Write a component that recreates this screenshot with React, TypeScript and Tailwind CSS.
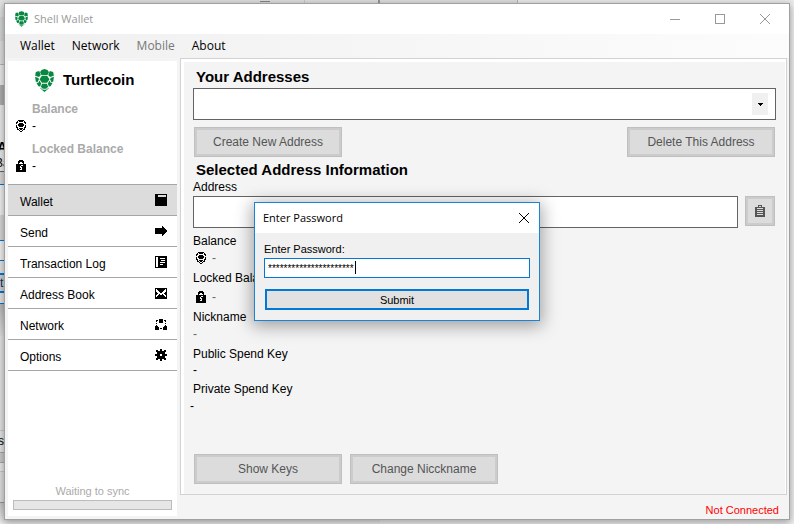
import React from "react";

type PixelIconProps = { rows: string[]; className?: string };

/* Monochrome bitmap glyph: "#" is ink, "." is blank. */
function PixelIcon({ rows, className = "" }: PixelIconProps) {
  const width = rows[0].length;
  return (
    <svg
      width={width}
      height={rows.length}
      viewBox={`0 0 ${width} ${rows.length}`}
      shapeRendering="crispEdges"
      fill="currentColor"
      aria-hidden="true"
      className={`shrink-0 ${className}`}
    >
      {rows.flatMap((row, y) =>
        [...row].map((c, x) => (c === "#" ? <rect key={`${x}-${y}`} x={x} y={y} width="1" height="1" /> : null)),
      )}
    </svg>
  );
}

const WALLET = [
  "############",
  "###........#",
  "###........#",
  "############",
  "############",
  "############",
  "############",
  "############",
  "############",
  "############",
  "############",
  "############",
];
const SEND = [
  "............",
  ".......#....",
  ".......##...",
  "##########..",
  "###########.",
  "############",
  "############",
  "###########.",
  "##########..",
  ".......##...",
  ".......#....",
  "............",
];
const LOG = [
  "############",
  "#..#########",
  "#..##.....##",
  "#..#########",
  "#..###....##",
  "#..#########",
  "#..##.....##",
  "#..#########",
  "#..##...####",
  "#..#########",
  "#..#########",
  "############",
];
const MAIL = [
  "############",
  "#.########.#",
  "#..######..#",
  "#...####...#",
  "##...##...##",
  "###......###",
  "##..#..#..##",
  "#..######..#",
  "#.########.#",
  "############",
  "############",
];
const NETWORK = [
  "....####....",
  ".##.####.##.",
  ".#..####..#.",
  "....####....",
  ".#........#.",
  "............",
  ".#........#.",
  "###......###",
  "####....####",
  "####.##.####",
  "####....####",
];
const GEAR = [
  ".....##.....",
  ".##..##..##.",
  ".##########.",
  "..########..",
  "..########..",
  "#####..#####",
  "#####..#####",
  "..########..",
  "..########..",
  ".##########.",
  ".##..##..##.",
  ".....##.....",
];
const COIN = [
  "..######..",
  ".#.####.#.",
  "##......##",
  "#..####..#",
  "..######..",
  "#.######.#",
  "#..####..#",
  "##......##",
  ".#.####.#.",
  ".##.##.##.",
  "...#..#...",
  "....##....",
];
const LOCK = [
  "...####...",
  "..######..",
  "..##..##..",
  "..#....#..",
  "##########",
  "#####..###",
  "####.#####",
  "####..####",
  "#####.####",
  "####..####",
  "##########",
  "##########",
];
const CLIPBOARD = [
  "...####...",
  "...#..#...",
  "##########",
  "##......##",
  "##########",
  "##......##",
  "##########",
  "##......##",
  "##########",
  "##......##",
  "##########",
  "##########",
];

function ShellLogo({ className }: { className: string }) {
  return (
    <svg viewBox="0 0 19 23" fill="#07873f" aria-hidden="true" className={`shrink-0 ${className}`}>
      <path d="M6.5 1 9.5 0 12.5 1 14 3.2 12.5 5.9H6.5L5 3.2z" />
      <path d="M.8 2.9 4.2 2.1 5.8 5.9 4 8 .2 6.8z" />
      <path d="M18.2 2.9 14.8 2.1 13.2 5.9 15 8l3.8-1.2z" />
      <path d="M6.9 6.8h5.2l2.4 3.5-2.4 3.5H6.9l-2.4-3.5z" />
      <path d="M.1 7.8 3.5 8.9 3.8 10.6 2.7 13 .8 12.8z" />
      <path d="M18.9 7.8 15.5 8.9l-.3 1.7L16.3 13l1.9-.2z" />
      <path d="M4.4 11.6 6.2 14.4 5.2 17.6 3.4 17.3 1.4 13.8 3.4 13.7z" />
      <path d="M14.6 11.6 12.8 14.4l1 3.2 1.8-.3 2-3.5-2-.1z" />
      <path d="M7 14.7h5l1.1 3-1.9 2.1H7.8L5.9 17.7z" />
      <path d="M5.4 18.4 7.3 20.5 9.5 20.7 11.7 20.5 13.6 18.4 13.6 19.6 9.5 23 5.4 19.6z" />
    </svg>
  );
}

function Cross({ className = "" }: { className?: string }) {
  return (
    <svg width="12" height="12" viewBox="0 0 12 12" stroke="currentColor" fill="none" aria-hidden="true" className={className}>
      <path d="M1 1 11 11M11 1 1 11" />
    </svg>
  );
}

const NAV = [
  { label: "Wallet", icon: WALLET, active: true },
  { label: "Send", icon: SEND },
  { label: "Transaction Log", icon: LOG },
  { label: "Address Book", icon: MAIL },
  { label: "Network", icon: NETWORK },
  { label: "Options", icon: GEAR },
];

const BUTTON =
  "flex h-[30px] items-center justify-center border border-[#bfbfbf] bg-[#dcdcdc] text-[12px] text-[#555] ring-2 ring-inset ring-[#cccccc]";

/* Slices of the windows lying behind the wallet. */
function BackWindows() {
  return (
    <div aria-hidden="true" className="absolute inset-0 overflow-hidden bg-[#f4f4f4] text-[12px]">
      <div className="flex h-[3px] bg-[#e4e4e4]">
        <div className="w-[260px]" />
        <div className="mt-px h-px w-[10px] bg-[#888]" />
        <div className="w-[35px] border-r border-[#ccc]" />
        <div className="w-[75px] border-r-2 border-[#999]" />
        <div className="w-[138px] border-r border-[#bbb]" />
        <div className="flex-1 bg-[#efefef]" />
      </div>
      <div className="w-[380px]">
        <div className="h-[14px] bg-[#e6e6e6]" />
        <div className="h-6 bg-[#dadada]" />
        <div className="h-6 border-b border-[#bbb] bg-[#e4e4e4]" />
        <div className="h-5 bg-[#efefef]" />
        <div className="h-5 bg-[#b2b2b2]" />
        <div className="h-[67px] border-b border-[#666] bg-[#efefef] pt-[34px] leading-4">
          <div className="-ml-[3px] text-[14px] font-bold">A</div>
          <div className="-ml-[5px]">Ba</div>
        </div>
        <div className="h-3 bg-[#ddd]" />
        <div className="h-[31px] border-t border-[#0078d7] bg-[#f5f5f5]" />
        <div className="h-[26px] border-b border-[#0078d7] bg-[#dcdcdc]" />
        <div className="h-5 border-b border-[#0078d7] bg-[#f5f5f5]" />
        <div className="h-3 bg-[#e8e8e8]" />
        <div className="h-5 border-y-2 border-[#0078d7] bg-[#d4d4d4] leading-4 text-[#036]">t</div>
        <div className="h-[11px] border-b border-[#0078d7] bg-[#e8e8e8]" />
        <div className="h-8 bg-linear-to-b from-[#bbb] to-[#e4e4e4]" />
        <div className="h-[95px] border-b border-[#ccc] bg-[#e9e9e9]" />
        <div className="h-[21px] bg-[#e9e9e9] pt-[2px] leading-4">
          <div className="-ml-[2px]">sy</div>
        </div>
        <div className="h-[11px] border-y border-[#aaa] bg-[#cfcfcf]" />
        <div className="h-[9px] border-b border-[#ccc] bg-[#eee]" />
        <div className="h-[31px] border-b border-[#999] bg-[#e4e4e4]" />
        <div className="h-[22px] bg-linear-to-b from-[#ccc] to-[#f4f4f4]" />
      </div>
    </div>
  );
}

function Sidebar() {
  return (
    <aside className="flex w-[169px] shrink-0 flex-col bg-white">
      <div className="flex h-[38px] items-center gap-[9px] pl-[27px]">
        <ShellLogo className="h-[23px] w-[19px]" />
        <h1 className="pt-px text-[15px] font-bold">Turtlecoin</h1>
      </div>
      <div className="flex flex-col pl-2 text-[12px] leading-5">
        <h2 className="pl-4 font-bold text-[#aaa]">Balance</h2>
        <p className="flex items-center gap-[6px] leading-[14px]">
          <PixelIcon rows={COIN} />
          <span>-</span>
        </p>
        <h2 className="mt-[6px] pl-4 font-bold text-[#aaa]">Locked Balance</h2>
        <p className="flex items-center gap-[6px] leading-[14px]">
          <PixelIcon rows={LOCK} />
          <span>-</span>
        </p>
      </div>
      <nav className="mt-[11px] border-t border-[#a6a6a6]">
        {NAV.map((item) => (
          <button
            key={item.label}
            type="button"
            className={`flex h-[31px] w-full items-center justify-between border-b border-[#a6a6a6] pr-[10px] pl-3 text-[12px] ${
              item.active ? "bg-[#dcdcdc]" : "bg-white"
            }`}
          >
            <span className="pt-1">{item.label}</span>
            <PixelIcon rows={item.icon} />
          </button>
        ))}
      </nav>
      <div className="mt-auto px-[5px] pb-[6px]">
        <p id="sync" className="text-center text-[11px] leading-[18px] text-[#aaa]">
          Waiting to sync
        </p>
        <div role="progressbar" aria-labelledby="sync" className="h-[10px] border border-[#bcbcbc] bg-[#e6e6e6]" />
      </div>
    </aside>
  );
}

function WalletPanel() {
  return (
    <main className="flex flex-1 flex-col border border-[#d2d2d2] bg-white pt-[3px] pr-px pl-[3px]">
      <div className="flex flex-1 flex-col bg-[#f4f4f4] pr-[9px] pb-[10px] pl-[9px] text-[12px]">
        <label htmlFor="addresses" className="pt-1 pb-px pl-[3px] text-[15px] leading-[21px] font-bold">
          Your Addresses
        </label>
        <div className="relative">
          <select id="addresses" className="block h-8 w-full appearance-none border border-[#646464] bg-white">
            <option></option>
          </select>
          <span className="pointer-events-none absolute top-[5px] right-2 flex h-[22px] w-4 items-center justify-center bg-[#f0f0f0]">
            <PixelIcon rows={["#####", ".###.", "..#.."]} />
          </span>
        </div>
        <div className="mt-[7px] flex justify-between pr-px pl-px">
          <button type="button" className={`${BUTTON} w-[148px]`}>Create New Address</button>
          <button type="button" className={`${BUTTON} w-[148px]`}>Delete This Address</button>
        </div>
        <h2 className="mt-[2px] pl-[3px] text-[15px] leading-[21px] font-bold">Selected Address Information</h2>
        <label htmlFor="address" className="pb-px leading-[15px]">Address</label>
        <div className="flex gap-[7px] pr-px">
          <input id="address" type="text" readOnly className="h-8 min-w-0 flex-1 border border-[#646464] bg-white px-1" />
          <button type="button" aria-label="Copy address" className={`${BUTTON} w-[30px]`}>
            <PixelIcon rows={CLIPBOARD} />
          </button>
        </div>
        <dl className="mt-1 leading-[18px]">
          <dt>Balance</dt>
          <dd className="flex items-center gap-[6px] pl-[3px] leading-4">
            <PixelIcon rows={COIN} />
            <span className="text-[#666]">-</span>
          </dd>
          <dt className="mt-[3px]">Locked Balance</dt>
          <dd className="flex items-center gap-[6px] pt-[2px] pl-[3px] leading-4">
            <PixelIcon rows={LOCK} />
            <span className="text-[#666]">-</span>
          </dd>
          <dt className="mt-[3px]">Nickname</dt>
          <dd className="leading-4 text-[#666]">-</dd>
          <dt className="mt-[3px]">Public Spend Key</dt>
          <dd className="leading-[14px]">-</dd>
          <dt className="mt-[3px]">Private Spend Key</dt>
          <dd className="-ml-[3px] leading-4">-</dd>
        </dl>
        <div className="mt-auto flex gap-2 pl-px">
          <button type="button" className={`${BUTTON} w-[148px]`}>Show Keys</button>
          <button type="button" className={`${BUTTON} w-[148px]`}>Change Nicckname</button>
        </div>
      </div>
    </main>
  );
}

function PasswordDialog() {
  return (
    <form
      role="dialog"
      aria-label="Enter Password"
      onSubmit={(e) => e.preventDefault()}
      className="absolute top-[202px] left-[254px] w-[286px] border border-[#1883d7] bg-[#f0f0f0] pb-[10px] shadow-[0_3px_16px_2px_rgba(0,0,0,0.35)]"
    >
      <header className="flex h-[30px] items-center justify-between bg-white pr-[9px] pl-2 font-['Open_Sans',sans-serif] text-[11px]">
        <span>Enter Password</span>
        <button type="button" aria-label="Close">
          <Cross />
        </button>
      </header>
      <div className="flex flex-col px-[9px] pt-[7px] text-[11px]">
        <label htmlFor="password" className="leading-[18px]">Enter Password:</label>
        <div className="relative">
          <input
            id="password"
            type="text"
            autoComplete="off"
            defaultValue={"*".repeat(22)}
            className="block h-5 w-full border border-[#0078d7] bg-white px-[3px] text-[10px] outline-none"
          />
          <span className="absolute top-[3px] left-[91px] h-[13px] w-px bg-black" />
        </div>
        <button type="submit" className="mx-px mt-[11px] h-[21px] border-2 border-[#0078d7] bg-[#e1e1e1] leading-4">
          Submit
        </button>
      </div>
    </form>
  );
}

export default function App() {
  return (
    <div className="relative flex h-screen overflow-hidden pt-[3px] pr-1 pb-1 pl-1 font-['Liberation_Sans',Arial,sans-serif] text-black">
      <BackWindows />
      <div className="relative flex flex-1 flex-col border border-[#a0a0a0] bg-[#f4f4f4] shadow-[0_2px_8px_1px_rgba(0,0,0,0.35)]">
        <header className="flex h-[30px] shrink-0 items-center bg-white pl-[10px] font-['Open_Sans',sans-serif] text-[11px] text-[#999]">
          <ShellLogo className="mr-[6px] h-4 w-[13px]" />
          <span className="flex-1">Shell Wallet</span>
          <div className="flex gap-[33px] pr-[18px]">
            <button type="button" aria-label="Minimize" className="w-3">
              <span className="mx-auto block h-px w-[10px] bg-[#999]" />
            </button>
            <button type="button" aria-label="Maximize" className="w-3">
              <span className="mx-auto block h-[10px] w-[10px] border border-[#999]" />
            </button>
            <button type="button" aria-label="Close">
              <Cross />
            </button>
          </div>
        </header>
        <div className="flex h-6 shrink-0 items-center gap-[17px] bg-linear-to-r from-[#f0f0f0] to-[#fcfcfc] pl-[15px] font-['Open_Sans',sans-serif] text-[12px]">
          <button type="button">Wallet</button>
          <button type="button">Network</button>
          <button type="button" disabled className="text-[#777]">Mobile</button>
          <button type="button">About</button>
        </div>
        <div className="flex flex-1 pr-[2px] pl-[3px]">
          <div className="flex pt-[3px] pr-[3px] pb-[3px]">
            <Sidebar />
          </div>
          <div className="flex flex-1 flex-col">
            <WalletPanel />
            <footer className="flex h-6 items-center justify-end pt-[6px] pr-2 text-[11px] text-[#f00]">Not Connected</footer>
          </div>
        </div>
      </div>
      <PasswordDialog />
    </div>
  );
}
